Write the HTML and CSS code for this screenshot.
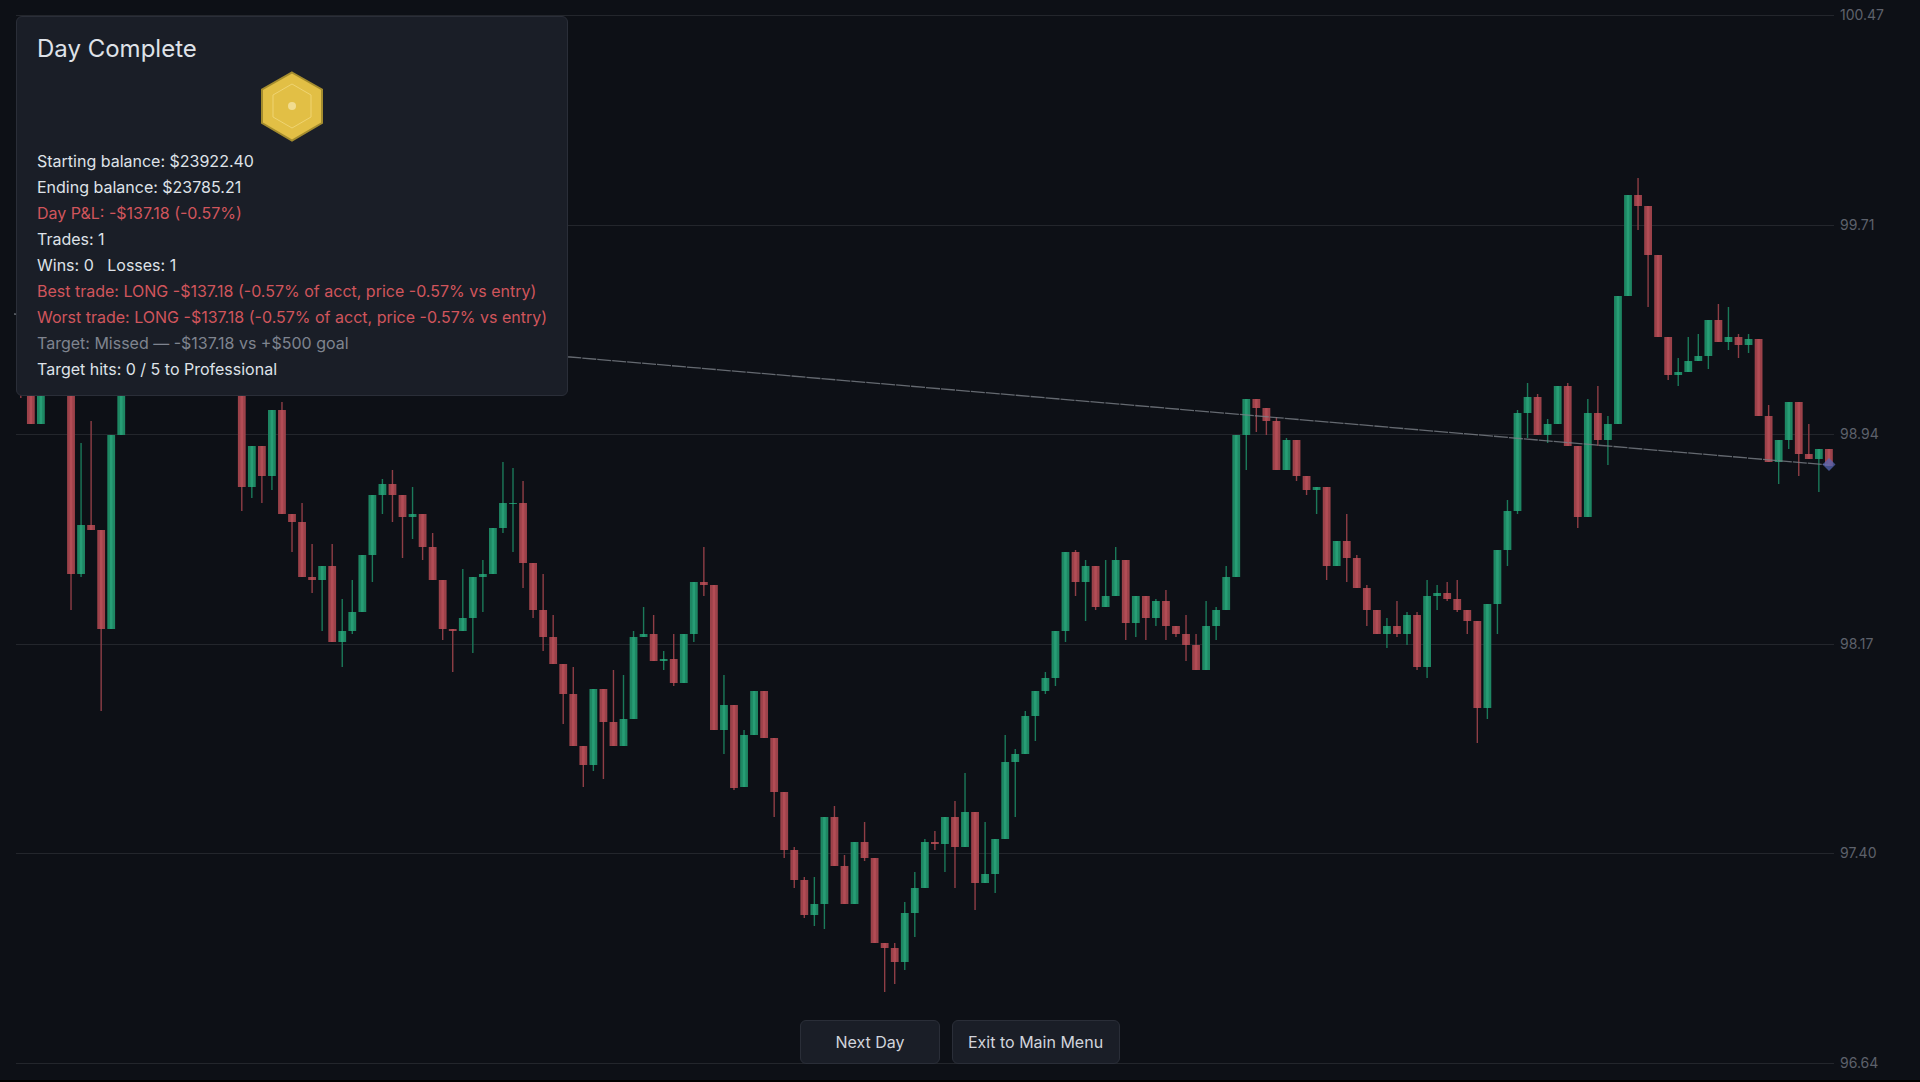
FILE: index.html
```html
<!DOCTYPE html>
<html lang="en">
<head>
<meta charset="utf-8">
<title>Day Complete</title>
<link rel="stylesheet" href="styles.css">
</head>
<body>
<main class="stage">
  <svg class="chart" id="chart" width="1920" height="1080" viewBox="0 0 1920 1080" aria-label="Price chart"></svg>

  <section class="panel">
    <h2 class="panel-title">Day Complete</h2>
    <div class="badge">
      <svg width="64" height="72" viewBox="0 0 64 72">
        <polygon class="hex-outer" points="32,1.5 62,18.5 62,52 32,69.5 2,52 2,18.5"/>
        <polygon class="hex-inner" points="32,13 51,24 51,46 32,57 13,46 13,24"/>
        <circle class="hex-dot" cx="32" cy="35" r="4"/>
      </svg>
    </div>
    <p class="line">Starting balance: $23922.40</p>
    <p class="line">Ending balance: $23785.21</p>
    <p class="line loss">Day P&amp;L: -$137.18 (-0.57%)</p>
    <p class="line">Trades: 1</p>
    <p class="line">Wins: 0 &nbsp; Losses: 1</p>
    <p class="line loss">Best trade: LONG -$137.18 (-0.57% of acct, price -0.57% vs entry)</p>
    <p class="line loss">Worst trade: LONG -$137.18 (-0.57% of acct, price -0.57% vs entry)</p>
    <p class="line muted">Target: Missed — -$137.18 vs +$500 goal</p>
    <p class="line">Target hits: 0 / 5 to Professional</p>
  </section>

  <nav class="actions">
    <button class="btn btn-next" type="button">Next Day</button>
    <button class="btn" type="button">Exit to Main Menu</button>
  </nav>
</main>
<script src="chart.js"></script>
</body>
</html>
```

FILE: styles.css
```css
* { box-sizing: border-box; }
html, body { margin: 0; padding: 0; background: #000; }
body {
  width: 1920px;
  height: 1082px;
  overflow: hidden;
  font-family: Inter, "Liberation Sans", sans-serif;
}
.stage {
  position: relative;
  width: 1920px;
  height: 1080px;
  background: #0d1016;
}
.chart { position: absolute; left: 0; top: 0; display: block; }
.grid { stroke: #23262c; stroke-width: 1; shape-rendering: crispEdges; }
.axis-label { fill: #5d616b; font-family: Inter, "Liberation Sans", sans-serif; font-size: 14px; dominant-baseline: central; }
.wick-g { stroke: #1b7a5a; stroke-width: 1.4; }
.wick-r { stroke: #8f3e46; stroke-width: 1.4; }
.body-g { fill: #1e8763; }
.body-r { fill: #9c424a; }
.core-g { fill: #279d75; }
.core-r { fill: #b24c55; }
.trend { fill: none; stroke: #7b7f87; stroke-width: 1.3; stroke-dasharray: 14 1; opacity: .8; }
.marker { fill: #5566b4; opacity: .75; }

.panel {
  position: absolute;
  left: 16px;
  top: 16px;
  width: 552px;
  height: 380px;
  padding: 15px 20px 0;
  background: #1a1e27;
  border: 1px solid #2a2e38;
  border-radius: 6px;
  color: #dfe2e8;
}
.panel-title {
  margin: 0;
  font-size: 24px;
  font-weight: 400;
  line-height: 33px;
  color: #dfe2e8;
}
.badge { display: flex; justify-content: center; height: 77px; margin-top: 6px; }
.hex-outer { fill: #e2bf45; stroke: #a48c2e; stroke-width: 2; }
.hex-inner { fill: none; stroke: #efd472; stroke-width: 1; }
.hex-dot { fill: #f1dc90; }
.line { margin: 0; font-size: 16px; line-height: 26px; white-space: nowrap; }
.loss { color: #d0555c; }
.muted { color: #7f848f; }

.actions {
  position: absolute;
  left: 800px;
  top: 1020px;
  display: flex;
  gap: 12px;
}
.btn {
  height: 44px;
  padding: 0 16px 0 15px;
  font: 400 16px Inter, "Liberation Sans", sans-serif;
  color: #d1d4dc;
  background: #1a1e27;
  border: 1px solid #2a2e38;
  border-radius: 6px;
}
.btn-next { width: 140px; padding: 0; }
```

FILE: chart.js
```js
// Each candle: colour, body top, body bottom, wick top, wick bottom (pixel rows).
var CHUNKS = [
  [0, "r 385 386 380 398;r 385 424;g 385 424"],
  [5, "r 385 574 385 610;g 525 574 443 577;r 525 530 421;r 530 629 530 711;g 435 629;g 385 435"],
  [22, "r 385 487 385 511;g 446 487 446 498;r 446 476 446 503;g 410 476 410 490;r 410 514 402;" +
       "r 514 522 514 552;r 522 577 503;r 577 580 544 593;g 566 580 566 631;r 566 642 544;" +
       "g 631 642 599 667;g 612 631 580 634;g 555 612;g 495 555 495 582;g 484 495 479 514;" +
       "r 484 495 470 522;r 495 517 495 558;g 514 517 487 539;r 514 547 514 560;r 547 580 533;" +
       "r 580 629 580 640;r 629 631 629 672;g 618 631 569;g 577 618 577 653;g 574 577 560 612;" +
       "g 528 574;g 503 528 462 533;g 503 504 468 552;r 503 563 481 588;r 563 610 563 618;" +
       "r 610 637 574 651;r 637 664 615;r 664 694 664 724;r 694 746 667;r 746 765 746 787;" +
       "g 689 765 689 771;r 689 722 689 779;r 722 746 670;g 719 746 675;g 637 719 631;" +
       "g 634 637 607;r 634 661 615;g 659 661 651 670;r 659 683 634 686;g 634 683;" +
       "g 582 634 582 642;r 582 585 547 596;r 585 730;g 705 730 675 754;r 705 788 705 790;" +
       "g 735 787 730;g 691 735;r 691 738;r 738 792 738 817;r 792 850 792 858;" +
       "r 850 880 847 888;r 880 915 877 918;g 904 915 877 926;g 817 904 817 929;r 817 866 806;" +
       "r 866 904 855;g 842 904;r 842 858 822 861;r 858 943;r 943 948 943 992;" +
       "r 948 962 943 984;g 913 962 902 970;g 888 913 872 937;g 842 888 839;r 842 844 831 850;" +
       "g 817 844 817 872;r 817 847 801 888;g 812 847 773;r 812 883 812 910;g 874 883 822;" +
       "g 839 874 839 893;g 762 839 735;g 754 762 749 817;g 716 754 711;g 691 716 691 741;" +
       "g 678 691 672 694;g 631 678 631 686;g 552 631 552 642;r 552 582 550 596;" +
       "g 566 582 560 621;r 566 607 566 610;g 596 607 560;g 560 596 547;r 560 623 560 640;" +
       "g 596 623 596 637;r 596 618 596 640;g 601 618 599 626;r 601 626 590 640;" +
       "r 626 634 626 637;r 634 645 615 661;r 645 670 634;g 626 670 601;g 610 626 607 640;" +
       "g 577 610 566;g 435 577;g 399 435 399 470;r 399 408 399 432;r 408 421 408 435;" +
       "r 421 470 417;g 440 470 438;r 440 476 440 481;r 476 490 476 495;g 487 490 487 514;" +
       "r 487 566 487 580;g 541 566;r 541 558 514 582;r 558 588 555;r 588 610 585 626;" +
       "r 610 634;g 626 634 618 648;r 626 634 601 637;g 615 634 612 645;r 615 667 612 670;" +
       "g 596 667 580 678;g 593 596 585 610;r 593 599 582 601;r 599 610 580 612;" +
       "r 610 621 610 634;r 621 708 621 743;g 604 708 604 719;g 550 604 550 634;" +
       "g 511 550 500 566;g 413 511 410 514;g 397 413 383 438;r 397 435 394;g 424 435 419 443;" +
       "g 386 424;r 386 446 383;r 446 517 446 528;g 413 517 399;r 413 440 386 446;" +
       "g 424 440 416 465;g 296 424;g 195 296;r 195 206 178 230;r 206 255 206 307;r 255 337;" +
       "r 337 375 337 380;g 372 375 358 386;g 361 372 337;g 356 361 334;g 320 356 320 369;" +
       "r 320 342 304;g 337 342 307 350;r 337 345 334 358;g 339 345 334 353;r 339 416;" +
       "r 416 462 405;g 440 462 440 484;g 402 440 402 449;r 402 454 402 476;r 454 459 424;" +
       "g 449 459 449 492;r 449 466"]
];
var GRID = [[15.5, "100.47"], [225.5, "99.71"], [434.5, "98.94"], [644.5, "98.17"], [853.5, "97.40"], [1063.5, "96.64"]];

var NS = "http://www.w3.org/2000/svg";
var chart = document.getElementById("chart");
function add(tag, attrs, text) {
  var el = document.createElementNS(NS, tag);
  for (var k in attrs) el.setAttribute(k, attrs[k]);
  if (text) el.textContent = text;
  chart.appendChild(el);
}
GRID.forEach(function (g) {
  add("line", { "class": "grid", x1: 16, x2: 1834, y1: g[0], y2: g[0] });
  add("text", { "class": "axis-label", x: 1840, y: g[0] - 1 }, g[1]);
});
CHUNKS.forEach(function (chunk) {
  chunk[1].split(";").forEach(function (row, n) {
    var p = row.split(" ");
    var c = p[0], top = +p[1], bot = +p[2];
    var wt = p[3] ? +p[3] : top, wb = p[4] ? +p[4] : bot;
    var x = 20.8 + 10.045 * (chunk[0] + n);
    add("line", { "class": "wick-" + c, x1: x, x2: x, y1: wt, y2: wb });
    add("rect", { "class": "body-" + c, x: x - 3.9, y: top, width: 7.8, height: bot - top });
    add("rect", { "class": "core-" + c, x: x - 1.3, y: top, width: 2.6, height: bot - top });
  });
});
add("polyline", { "class": "trend", points: "14,314 570,357 1829,465" });
add("polygon", { "class": "marker", points: "1829,458 1835.5,464.5 1829,471 1822.5,464.5" });
```
